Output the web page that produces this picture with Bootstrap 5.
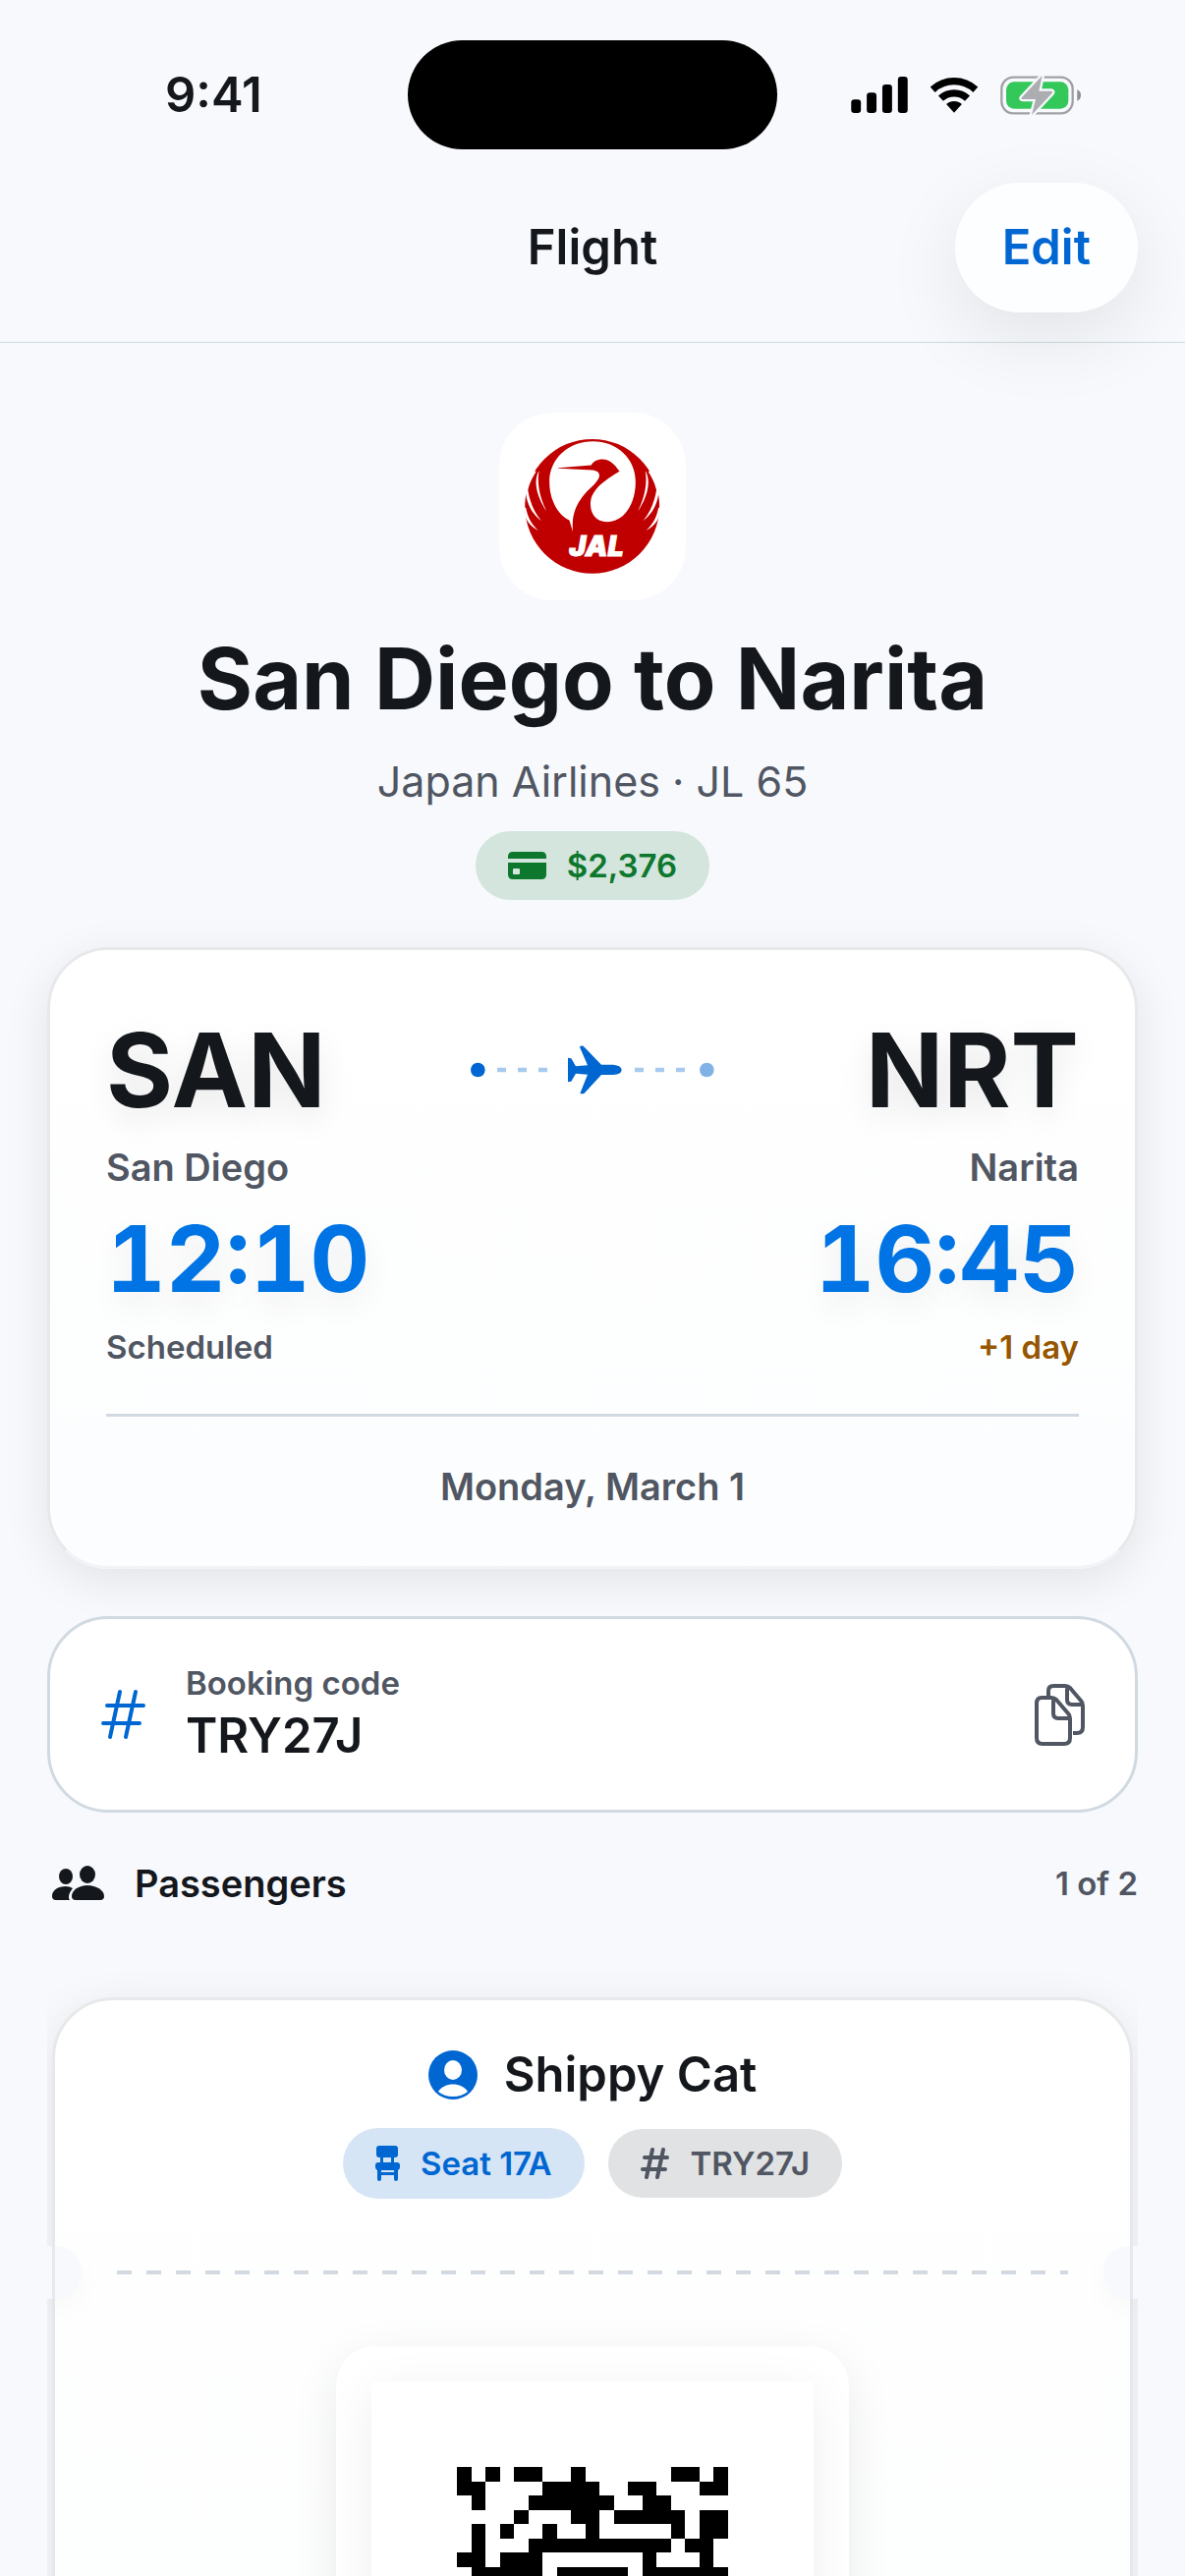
<!DOCTYPE html>
<html lang="en">
<head>
<meta charset="utf-8">
<meta name="viewport" content="width=device-width, initial-scale=1">
<title>Flight</title>
<link href="https://cdn.jsdelivr.net/npm/bootstrap@5.3.0/dist/css/bootstrap.min.css" rel="stylesheet">
<style>
  :root {
    --ink: #14171c;
    --muted: #505662;
    --blue: #0066d1;
    --line: #d1d9e1;
    --page: #f7f9fd;
  }
  body {
    background: var(--page);
    color: var(--ink);
    font-family: Inter, "Liberation Sans", sans-serif;
    font-size: 33px;
    line-height: 44px;
    height: 100vh;
    overflow: hidden;
  }
  svg { display: block; flex: none; }
  .semi { font-weight: 600; }
  .med { font-weight: 500; }
  .soft { color: var(--muted); }
  .size-m { font-size: 38px; line-height: 50px; }
  .size-l { font-size: 49px; line-height: 64px; }

  .status { display: grid; grid-template-columns: 1fr auto 1fr; padding-top: 41px; }
  .status-time { padding-left: 168px; }
  .status-icons { padding-right: 106px; gap: 22px; }
  .island { width: 376px; height: 111px; border-radius: 56px; background: #000; }

  .topbar { display: grid; grid-template-columns: 1fr auto 1fr; padding: 34px 48px 30px; border-bottom: 1px solid var(--line); }
  .edit { height: 132px; padding: 0 48px; border: 0; border-radius: 66px; background: #fdfeff; color: var(--blue); box-shadow: 0 24px 80px rgba(0,0,0,.09); }

  .page { padding: 0 48px; }
  .hero { padding-top: 71px; }
  .logo { border-radius: 54px; background: #fff; overflow: hidden; }
  .route { font-size: 86px; line-height: 106px; font-weight: 700; margin: 27px 0 24px; }
  .carrier { font-size: 43px; line-height: 54px; margin-bottom: 24px; }
  .chip { height: 70px; border-radius: 36px; padding: 0 33px; gap: 21px; }
  .chip-green { background: #d3e5dc; color: #0d772d; }
  .chip-blue { height: 72px; background: #d6e5f5; color: var(--blue); }
  .chip-grey { background: #e1e2e4; color: var(--muted); }

  .panel { border: 3px solid #e7e8ea; border-radius: 62px; background: linear-gradient(#fff, #fcfdfe); box-shadow: 0 12px 48px rgba(0,0,0,.09); }
  .trip { margin-top: 48px; padding: 56px 57px; border-bottom-color: #f2f3f6; }
  .ends { display: grid; grid-template-columns: 1fr auto 1fr; }
  .code { font-size: 104px; line-height: 132px; font-weight: 700; text-shadow: 0 12px 32px rgba(0,0,0,.09); margin-bottom: 8px; }
  .track { margin-top: 41px; }
  .clock { font-size: 94px; line-height: 112px; font-weight: 700; font-feature-settings: "tnum"; color: #0074e4; text-shadow: 0 12px 32px rgba(0,0,0,.07); margin: 12px 0; }
  .nextday { color: #955600; }
  .rule { height: 3px; margin: 46px 0; background: var(--line); }

  .booking { margin-top: 48px; height: 200px; padding: 0 48px 0 50px; border: 3px solid var(--line); border-radius: 62px; background: #fff; }
  .booking-text { margin-left: 40px; }
  .copy { border: 0; padding: 0; background: none; color: var(--muted); }

  .people { margin-top: 47px; }
  .people-icon { margin: 0 30px 0 5px; }
  .carousel-clip { margin-top: 46px; padding: 45px 5px 0; overflow: hidden; }
  .ticket { position: relative; padding: 48px 63px; }
  .holder { gap: 26px; }
  .holder-name { line-height: 56px; }
  .ticket .chips { margin-top: 26px; gap: 24px; }
  .perforation { margin: 73px 0; height: 4px; background: repeating-linear-gradient(90deg, #d3d9e0 0 15px, transparent 15px 30px); }
  /* half-round cut-outs at the two ends of the tear line */
  .notch { position: absolute; top: 250px; width: 35px; height: 54px; background: var(--page); box-shadow: 0 12px 30px rgba(0,0,0,.03); }
  .notch::after { content: ""; position: absolute; top: 0; bottom: 0; width: 3px; background: #e7e9ee; }
  .notch-l { left: -8px; border-radius: 0 27px 27px 0; }
  .notch-l::after { left: 5px; }
  .notch-r { right: -8px; border-radius: 27px 0 0 27px; }
  .notch-r::after { right: 5px; }
  .pass { padding: 36px; border-radius: 40px; background: #fff; box-shadow: 0 12px 48px rgba(0,0,0,.08); }
  .pass-code { background: #fff; box-shadow: 0 12px 48px rgba(0,0,0,.07); }
</style>
</head>
<body>
<header>
  <div class="status align-items-center">
    <div class="status-time size-l semi">9:41</div>
    <div class="island"></div>
    <div class="status-icons d-flex justify-content-end align-items-center">
      <svg width="58" height="37" viewBox="0 0 174 112" role="img" aria-label="Signal"><rect y="70" width="30" height="42" rx="10"/><rect x="48" y="49" width="30" height="63" rx="10"/><rect x="96" y="24" width="30" height="88" rx="10"/><rect x="144" width="30" height="112" rx="10"/></svg>
      <svg width="50" height="37" viewBox="0 0 150 112" role="img" aria-label="Wi-Fi"><g fill="none" stroke="#000" stroke-width="22"><path d="M9 40A97 97 0 0 1 141 40"/><path d="M34 67A60 60 0 0 1 116 67"/></g><path d="M75 111L51 85A35 35 0 0 1 99 85Z"/></svg>
      <svg width="82" height="40" viewBox="0 0 246 120" role="img" aria-label="Battery charging"><rect x="4" y="5" width="217" height="110" rx="36" fill="none" stroke="#a0a1a4" stroke-width="7"/><path d="M235 43Q246 48 246 60T235 77Z" fill="#8c8d90"/><rect x="18" y="19" width="190" height="82" rx="24" fill="#34c759"/><path d="M128 0L66 66Q62 72 69 72H108L96 120L158 54Q162 48 155 47H118Z" fill="#acadb0" stroke="#f7f9fd" stroke-width="14" stroke-linejoin="round" paint-order="stroke"/></svg>
    </div>
  </div>
  <nav class="topbar align-items-center">
    <span></span>
    <h1 class="size-l semi m-0">Flight</h1>
    <button type="button" class="edit size-l semi ms-auto">Edit</button>
  </nav>
</header>

<main class="page">
  <section class="hero d-flex flex-column align-items-center text-center">
    <svg class="logo" width="190" height="191" viewBox="85 60 570 575" role="img" aria-label="Japan Airlines">
      <circle cx="369" cy="347" r="206" fill="#c00000"/>
      <path fill="#fff" d="M371 148C445 148 502 200 502 272C502 342 465 395 415 395C378 395 362 367 364 335C368 290 420 260 453 240C442 226 428 203 400 203C384 203 372 210 366 221L265 229V231L370 236C390 238 396 250 387 265C372 290 342 302 320 350C308 378 308 400 310 425L299 390C262 372 238 325 238 272C238 200 297 148 371 148Z"/>
      <g fill="#fff"><path d="M206 238C190 265 194 310 229 362C206 315 200 275 206 238Z"/><path d="M150 240H197L196 243C184 262 178 275 172 298L150 300Z"/><path d="M150 290L172 296C178 335 192 366 213 391C184 370 170 340 166 310Z"/><path d="M155 345L166 352C172 382 184 404 204 421C182 410 170 395 165 380Z"/></g>
      <g fill="#fff" transform="matrix(-1 0 0 1 738 0)"><path d="M206 238C190 265 194 310 229 362C206 315 200 275 206 238Z"/><path d="M150 240H197L196 243C184 262 178 275 172 298L150 300Z"/><path d="M150 290L172 296C178 335 192 366 213 391C184 370 170 340 166 310Z"/><path d="M155 345L166 352C172 382 184 404 204 421C182 410 170 395 165 380Z"/></g>
      <text x="382" y="501" text-anchor="middle" font-family="Inter, sans-serif" font-size="86" font-weight="900" font-style="italic" fill="#fff" stroke="#fff" stroke-width="3">JAL</text>
    </svg>
    <h2 class="route">San Diego to Narita</h2>
    <p class="carrier soft">Japan Airlines · JL 65</p>
    <div class="chip chip-green semi d-flex align-items-center">
      <svg width="39" height="28" viewBox="0 0 39 28" fill="currentColor" aria-hidden="true"><path d="M0 7V5Q0 0 5 0H34Q39 0 39 5V7Z"/><path fill-rule="evenodd" d="M0 11H39V23Q39 28 34 28H5Q0 28 0 23ZM6 17Q5 17 5 18V22Q5 23 6 23H11Q12 23 12 22V18Q12 17 11 17Z"/></svg>
      <span>$2,376</span>
    </div>
  </section>

  <section class="panel trip">
    <div class="ends">
      <div>
        <div class="code">SAN</div>
        <div class="size-m semi soft">San Diego</div>
        <div class="clock">12:10</div>
        <div class="semi soft">Scheduled</div>
      </div>
      <svg class="track" width="248" height="50" viewBox="0 0 744 150" aria-hidden="true">
        <circle cx="22" cy="75" r="22" fill="#0066d1"/><circle cx="721" cy="75" r="22" fill="#80b2e6"/>
        <path d="M81 75H235M501 75H655" stroke="#a8caee" stroke-width="14" stroke-dasharray="27 36"/>
        <path transform="translate(-117 -101)" fill="#0066d1" d="M414 139L424 141L438 165L474 162L450 106Q450 102 461 103L516 160H552Q578 163 578 176Q578 189 552 191H516L464 247Q460 250 451 248L474 190L438 187L424 211L414 213Z"/>
      </svg>
      <div class="text-end">
        <div class="code">NRT</div>
        <div class="size-m semi soft">Narita</div>
        <div class="clock">16:45</div>
        <div class="semi nextday">+1 day</div>
      </div>
    </div>
    <div class="rule"></div>
    <div class="size-m semi soft text-center">Monday, March 1</div>
  </section>

  <section class="booking d-flex align-items-center">
    <svg width="48" height="52" viewBox="0 0 48 52" fill="none" stroke="#0066d1" stroke-width="4" stroke-linecap="round" aria-hidden="true"><path d="M21 3L11 49M37 3L27 49M8 17H45M4 35H41"/></svg>
    <div class="booking-text flex-fill">
      <div class="semi soft">Booking code</div>
      <div class="size-l semi">TRY27J</div>
    </div>
    <button type="button" class="copy" aria-label="Copy booking code">
      <svg width="56" height="66" viewBox="0 0 56 66" fill="none" stroke="currentColor" stroke-width="4" stroke-linejoin="round"><path d="M16 15V9Q16 4 21 4H33Q36 4 38 6L49 19Q51 21 51 24V46Q51 52 45 52H41M35 5V18Q35 23 40 23H50"/><path d="M4 22Q4 16 9 16H19Q22 16 24 18L36 32Q38 34 38 37V57Q38 63 32 63H10Q4 63 4 57ZM21 17V32Q21 37 26 37H37"/></svg>
    </button>
  </section>

  <section class="people">
    <div class="d-flex align-items-center">
      <svg class="people-icon" width="54" height="36" viewBox="0 0 54 36" fill="currentColor" aria-hidden="true"><ellipse cx="14" cy="11" rx="7" ry="8"/><ellipse cx="36" cy="9" rx="8" ry="9"/><path d="M18 35H4Q0 35 0 31C0 25 6 21 14 21Q18 21 21 23Q17 28 17 32Q17 34 18 35Z"/><path d="M24 35Q20 35 20 31C20 25 27 20 36 20S53 25 53 31Q53 35 49 35Z"/></svg>
      <h3 class="size-m semi m-0">Passengers</h3>
      <span class="semi soft ms-auto">1 of 2</span>
    </div>

    <div class="carousel-clip">
      <article class="panel ticket">
        <span class="notch notch-l"></span><span class="notch notch-r"></span>
        <div class="holder d-flex justify-content-center align-items-center">
          <svg width="51" height="51" viewBox="0 0 51 51" aria-hidden="true"><circle cx="25" cy="25" r="25" fill="#0066d1"/><ellipse cx="25" cy="20" rx="9" ry="10" fill="#fff"/><path d="M10 42C16 32 34 32 40 42Q34 47 25 47T10 42Z" fill="#fff"/></svg>
          <h4 class="size-l semi holder-name m-0">Shippy Cat</h4>
        </div>
        <div class="chips d-flex justify-content-center align-items-center">
          <div class="chip chip-blue semi d-flex align-items-center">
            <svg width="25" height="36" viewBox="0 0 25 36" fill="currentColor" aria-hidden="true"><path d="M4 0H20Q23 0 23 3V9Q23 12 20 12H19V17H22Q25 17 25 20V22Q25 24 23 25V34Q23 36 21 36T19 34V30H6V34Q6 36 4 36T2 34V25Q0 24 0 22V20Q0 17 3 17H5V12H4Q1 12 1 9V3Q1 0 4 0ZM8 12V17H16V12ZM6 25V27H19V25Z" fill-rule="evenodd"/></svg>
            <span>Seat 17A</span>
          </div>
          <div class="chip chip-grey semi d-flex align-items-center">
            <svg width="30" height="32" viewBox="0 0 30 32" fill="none" stroke="currentColor" stroke-width="4" stroke-linecap="round" aria-hidden="true"><path d="M12 2L6 30M23 2L17 30M4 10H27M2 22H25"/></svg>
            <span>TRY27J</span>
          </div>
        </div>
        <div class="perforation"></div>
        <div class="d-flex justify-content-center">
          <div class="pass">
            <svg class="pass-code" width="450" height="450" viewBox="0 0 31 31" shape-rendering="crispEdges" role="img" aria-label="Boarding pass code">
              <path stroke="#000" d="M6 6.5h1m1 0h1m1 0h2m2 0h1m6 0h2m1 0h1M6 7.5h2m4 0h4m2 0h2m3 0h2M7 8.5h1m3 0h6m2 0h2M10 9.5h1m3 0h2m1 0h5m1 0h2M7 10.5h1m1 0h1m2 0h1m2 0h1m5 0h1m1 0h2M7 11.5h1m3 0h10m1 0h2M6 12.5h2m1 0h3m7 0h1m3 0h1M7 13.5h5m1 0h5m1 0h6"/>
            </svg>
          </div>
        </div>
      </article>
    </div>
  </section>
</main>
<script src="https://cdn.jsdelivr.net/npm/bootstrap@5.3.0/dist/js/bootstrap.bundle.min.js"></script>
</body>
</html>
